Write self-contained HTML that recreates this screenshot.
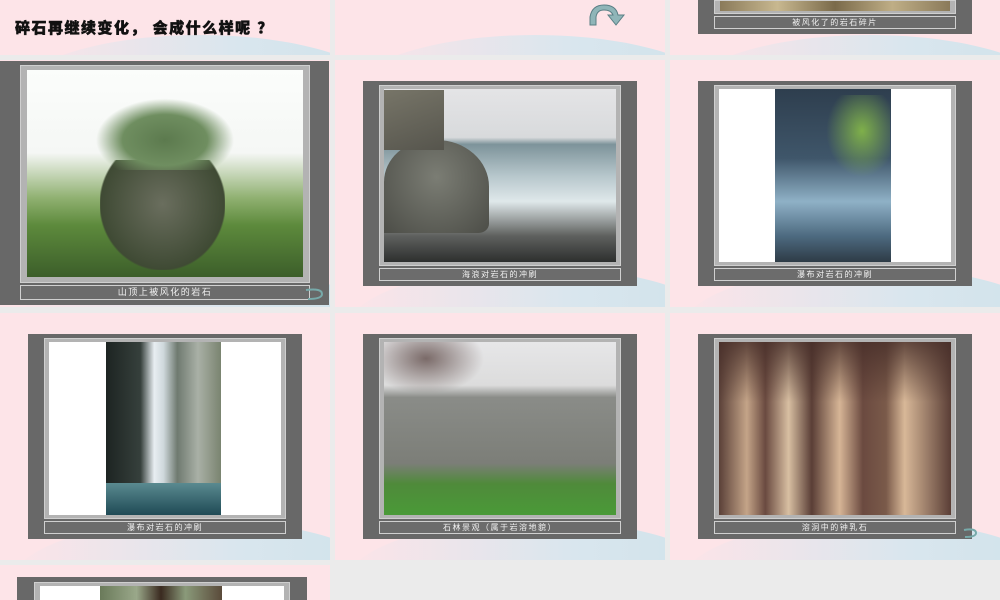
<!DOCTYPE html>
<html><head><meta charset="utf-8"><style>
*{margin:0;padding:0;box-sizing:border-box}
html,body{width:1000px;height:600px;overflow:hidden}
body{background:#ebebeb;position:relative;font-family:"Liberation Sans","Noto Sans CJK SC",sans-serif}
.s{position:absolute;width:330px;background:#fde4e8;overflow:hidden}
.s .w{position:absolute;right:-60px;bottom:-90px;width:380px;height:130px;border-radius:50%;background:linear-gradient(90deg,#fde4e8,#d9e6ee 60%,#cfe2ea)}
.a{position:absolute}
.o{background:#686868}
.i{background:#b3b3b3;border:1px solid #cfcfcf}
.c{background:#6c6c6c;border:1px solid #d0d0d0;color:#f2f2f2;font-size:8px;text-align:center;letter-spacing:1.5px;line-height:11px}
</style></head><body>
<!-- row 1 -->
<div class="s" style="left:0;top:0;height:55px"><div class="w" style="bottom:-110px"></div>
<div class="a" style="left:15px;top:17px;font-size:15px;font-weight:900;color:#111;letter-spacing:1.5px;-webkit-text-stroke:0.5px #111">碎石再继续变化， 会成什么样呢 ？</div></div>
<div class="s" style="left:335px;top:0;height:55px"><div class="w" style="bottom:-110px"></div>
<svg class="a" style="left:253px;top:3px" width="40" height="24" viewBox="0 0 40 24"><path d="M2 22 L2 14 Q4 2 16 2 Q28 2 30 12 L36 12 L28 22 L20 12 L25 12 Q23 7 16 7 Q9 7 8 14 L8 22 Z" fill="#8fb5b8" stroke="#5a7f85" stroke-width="1"/></svg></div>
<div class="s" style="left:670px;top:0;height:55px"><div class="w" style="bottom:-110px"></div>
<div class="a o" style="left:28px;top:0;width:274px;height:34px"></div>
<div class="a i" style="left:44px;top:0;width:242px;height:14px"><div style="margin:0 5px;height:10px;background:linear-gradient(90deg,#8a7a5a,#c8b890,#7a6a4a,#bfae86,#8a7a5a)"></div></div>
<div class="a c" style="left:44px;top:16px;width:242px;height:13px">被风化了的岩石碎片</div></div>

<!-- row 2 -->
<div class="s" style="left:0;top:60px;height:247px"><div class="w"></div>
<div class="a o" style="left:0;top:1px;width:329px;height:244px"></div>
<div class="a i" style="left:20px;top:5px;width:290px;height:218px"></div>
<div class="a" style="left:27px;top:10px;width:276px;height:207px;background:linear-gradient(180deg,#fbfdfb 0%,#f5f7f5 40%,#8fb070 62%,#5d8a3c 75%,#3c5e2a 100%)"></div>
<div class="a" style="left:100px;top:100px;width:125px;height:110px;background:radial-gradient(ellipse at 50% 40%,#6a6e5e,#3f4a34 70%,transparent 72%)"></div>
<div class="a" style="left:90px;top:35px;width:150px;height:75px;background:radial-gradient(ellipse at 50% 60%,#5c7a4e 0%,#6f8e60 40%,transparent 65%)"></div>
<div class="a c" style="left:20px;top:225px;width:290px;height:15px;line-height:13px;font-size:9px">山顶上被风化的岩石</div>
<svg class="a" style="left:304px;top:227px" width="22" height="14"><path d="M2 3 Q18 1 18 7 Q18 12 4 12" fill="none" stroke="#7aa" stroke-width="2"/></svg></div>

<div class="s" style="left:335px;top:60px;height:247px"><div class="w"></div>
<div class="a o" style="left:28px;top:21px;width:274px;height:205px"></div>
<div class="a i" style="left:44px;top:25px;width:242px;height:181px"></div>
<div class="a" style="left:49px;top:29px;width:232px;height:173px;background:linear-gradient(180deg,#e4e4e6 0%,#d8dadc 28%,#7d939a 32%,#b6c6cb 50%,#dfe8ea 65%,#5e605e 85%,#2d2f2e 100%)"></div>
<div class="a" style="left:49px;top:80px;width:105px;height:93px;border-radius:45% 50% 10% 0;background:radial-gradient(ellipse at 50% 40%,#7b7d74,#4c4d47)"></div>
<div class="a" style="left:49px;top:30px;width:60px;height:60px;background:linear-gradient(160deg,#777568,#56554d)"></div>
<div class="a c" style="left:44px;top:208px;width:242px;height:13px">海浪对岩石的冲刷</div></div>

<div class="s" style="left:670px;top:60px;height:247px"><div class="w"></div>
<div class="a o" style="left:28px;top:21px;width:274px;height:205px"></div>
<div class="a i" style="left:44px;top:25px;width:242px;height:181px"></div>
<div class="a" style="left:49px;top:29px;width:232px;height:173px;background:#fff"></div>
<div class="a" style="left:105px;top:29px;width:116px;height:173px;background:linear-gradient(180deg,#2e3e4e 0%,#3f566a 40%,#8fb1c6 65%,#4d6a80 85%,#2e3b46 100%)"></div>
<div class="a" style="left:150px;top:35px;width:70px;height:90px;background:radial-gradient(ellipse at 60% 40%,#7fb04a,transparent 60%)"></div>
<div class="a c" style="left:44px;top:208px;width:242px;height:13px">瀑布对岩石的冲刷</div></div>

<!-- row 3 -->
<div class="s" style="left:0;top:313px;height:247px"><div class="w"></div>
<div class="a o" style="left:28px;top:21px;width:274px;height:205px"></div>
<div class="a i" style="left:44px;top:25px;width:242px;height:181px"></div>
<div class="a" style="left:49px;top:29px;width:232px;height:173px;background:#fff"></div>
<div class="a" style="left:106px;top:29px;width:115px;height:173px;background:linear-gradient(90deg,#1d2422 0%,#36403c 30%,#e8eef2 42%,#cfd8dc 50%,#6f7a70 62%,#a9b0a6 80%,#7a8470 100%)"></div>
<div class="a" style="left:106px;top:170px;width:115px;height:32px;background:linear-gradient(180deg,#5a8a90,#1f4a55)"></div>
<div class="a c" style="left:44px;top:208px;width:242px;height:13px">瀑布对岩石的冲刷</div></div>

<div class="s" style="left:335px;top:313px;height:247px"><div class="w"></div>
<div class="a o" style="left:28px;top:21px;width:274px;height:205px"></div>
<div class="a i" style="left:44px;top:25px;width:242px;height:181px"></div>
<div class="a" style="left:49px;top:29px;width:232px;height:173px;background:linear-gradient(180deg,#e6e6e8 0%,#dcdcdc 25%,#8a8c88 32%,#7c7e78 70%,#4f8a3a 82%,#4a9a38 100%)"></div>
<div class="a" style="left:49px;top:29px;width:105px;height:55px;background:radial-gradient(ellipse at 40% 30%,#7a6a68 0%,transparent 65%)"></div>
<div class="a c" style="left:44px;top:208px;width:242px;height:13px">石林景观（属于岩溶地貌）</div></div>

<div class="s" style="left:670px;top:313px;height:247px"><div class="w"></div>
<div class="a o" style="left:28px;top:21px;width:274px;height:205px"></div>
<div class="a i" style="left:44px;top:25px;width:242px;height:181px"></div>
<div class="a" style="left:49px;top:29px;width:232px;height:173px;background:linear-gradient(90deg,#5a4038 0%,#c4a488 12%,#6a4a40 20%,#d8bfa2 30%,#5a3e36 40%,#d6b596 52%,#6b4a40 62%,#7a5a4a 72%,#d8b898 80%,#5a3e36 100%)"></div>
<div class="a" style="left:49px;top:29px;width:232px;height:60px;background:linear-gradient(180deg,rgba(70,45,40,.8),transparent)"></div>
<div class="a c" style="left:44px;top:208px;width:242px;height:13px">溶洞中的钟乳石</div>
<svg class="a" style="left:292px;top:214px" width="18" height="12"><path d="M2 3 Q14 1 14 6 Q14 10 3 10" fill="none" stroke="#7aa" stroke-width="2"/></svg></div>

<!-- row 4 -->
<div class="s" style="left:0;top:565px;height:35px">
<div class="a o" style="left:17px;top:12px;width:290px;height:23px"></div>
<div class="a i" style="left:34px;top:17px;width:256px;height:18px;border-bottom:0"></div>
<div class="a" style="left:40px;top:21px;width:244px;height:14px;background:#fff"></div>
<div class="a" style="left:100px;top:21px;width:122px;height:14px;background:linear-gradient(90deg,#6a7a5a,#9aa88a 30%,#3a2a20 50%,#8a9a7a 70%,#5a4a3a)"></div></div>
</body></html>
